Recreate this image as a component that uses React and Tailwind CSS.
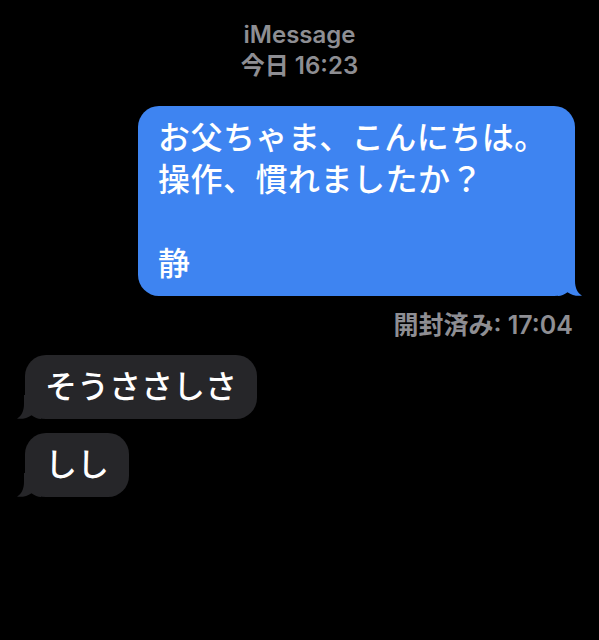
import React from "react";

const FONT = {
  fontFamily:
    'Inter, "Noto Sans CJK JP", "Noto Sans", sans-serif',
};

// little curl under the bubble corner
const Tail = ({ side, color }) => {
  const isRight = side === "right";
  return (
    <svg
      width="24"
      height="24"
      viewBox="0 0 24 24"
      className={
        isRight
          ? "absolute bottom-0 right-[-7px]"
          : "absolute bottom-0 left-[-8px] -scale-x-100"
      }
    >
      <path
        d="M0 0 H17 V9 C17 16 19.5 21 24 23.6 C19 24.4 13.5 23 9.5 20.2 C6.5 22.6 3 24 0 24 Z"
        fill={color}
      />
    </svg>
  );
};

const Sent = ({ text }) => (
  <div className="relative self-end mr-[24px] mt-[25px] w-[437px] rounded-[21px] bg-[#3e84f1] px-[20px] py-[11px]">
    <p className="whitespace-pre-line text-[32px] leading-[42px] font-medium text-white tracking-[0.5px]">
      {text}
    </p>
    <Tail side="right" color="#3e84f1" />
  </div>
);

const Received = ({ text, className }) => (
  <div
    className={`relative self-start ml-[25px] rounded-[21px] bg-[#262629] px-[20px] py-[11px] ${className}`}
  >
    <p className="text-[32px] leading-[42px] font-medium text-white">{text}</p>
    <Tail side="left" color="#262629" />
  </div>
);

export default function App() {
  return (
    <div className="min-h-[640px] bg-black flex flex-col pt-[19px]" style={FONT}>
      <div className="text-center text-[#8e8e93] text-[24px] leading-[31px] font-semibold">
        <div>iMessage</div>
        <div>今日 16:23</div>
      </div>

      <Sent text={"お父ちゃま、こんにちは。\n操作、慣れましたか？\n\n静"} />

      <div className="self-end mr-[26px] mt-[14px] text-[25px] leading-[30px] font-semibold text-[#8e8e93]">
        開封済み: 17:04
      </div>

      <Received text="そうささしさ" className="mt-[15px]" />
      <Received text="しし" className="mt-[14px]" />
    </div>
  );
}
